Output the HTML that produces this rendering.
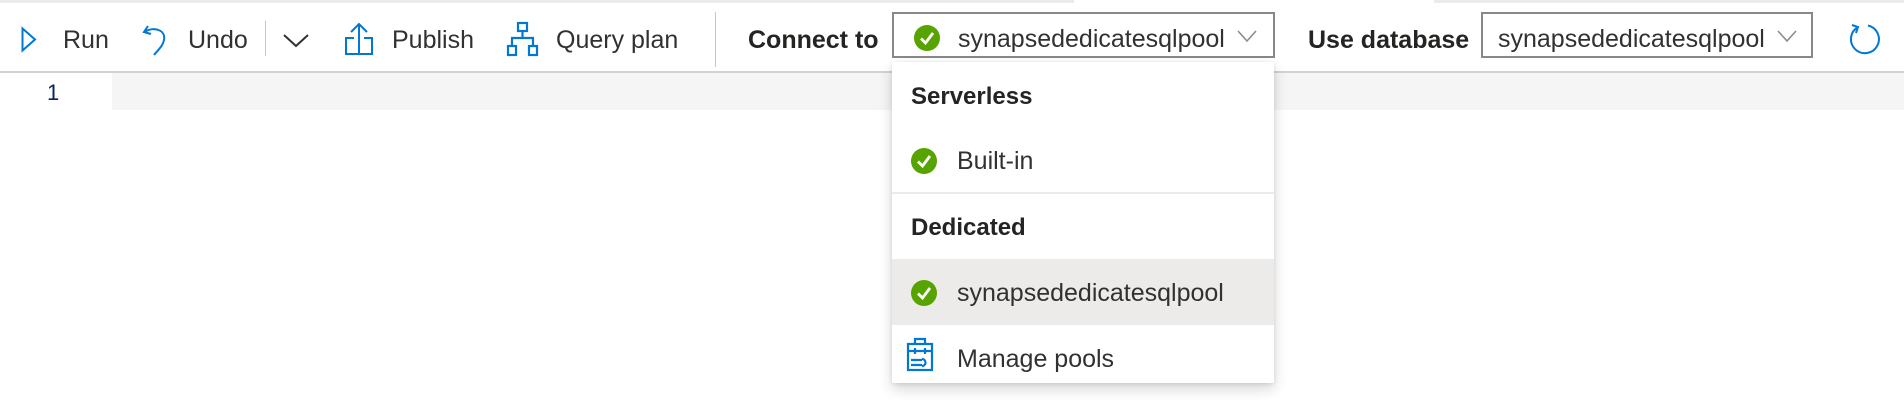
<!DOCTYPE html>
<html><head><style>
body{margin:0;width:1904px;height:418px;background:#fff;position:relative;overflow:hidden;font-family:"Liberation Sans",Arial,sans-serif;color:#323130}
.a{position:absolute}
.t{position:absolute;font-size:25px;line-height:30px;white-space:nowrap}
.b{font-weight:bold;color:#252423}
svg{position:absolute;overflow:visible}
</style></head><body>
<div class="a" style="left:0;top:0;width:1904px;height:3px;background:#ebebeb"></div>
<div class="a" style="left:1074px;top:0;width:360px;height:3px;background:#fff"></div>
<div class="a" style="left:0;top:71px;width:1904px;height:2px;background:#d2d2d2"></div>
<div class="a" style="left:112px;top:73px;width:1792px;height:37px;background:#f5f5f5"></div>
<div class="t" style="left:47px;top:78px;font-size:22px;color:#0b216f">1</div>

<svg style="left:21px;top:27px" width="16" height="25"><path d="M1.5 1.5 L14 12.5 L1.5 23.5 Z" fill="none" stroke="#0078d4" stroke-width="2"/></svg>
<div class="t" style="left:63px;top:25px">Run</div>
<svg style="left:142px;top:24px" width="28" height="32"><path d="M6 2 L2 8 L9 10 M2 8 C12 2 24 6 22 16 C21 22 16 26 12 31" fill="none" stroke="#0078d4" stroke-width="2"/></svg>
<div class="t" style="left:188px;top:25px">Undo</div>
<div class="a" style="left:265px;top:21px;width:1px;height:35px;background:#c8c6c4"></div>
<svg style="left:283px;top:34px" width="26" height="14"><path d="M1 1 L13 12 L25 1" fill="none" stroke="#323130" stroke-width="2"/></svg>
<svg style="left:344px;top:22px" width="30" height="34"><path d="M15 31 V2 M7 10 L15 2 L23 10 M10 16 H2 V32 H28 V16 H20" fill="none" stroke="#0078d4" stroke-width="2"/></svg>
<div class="t" style="left:392px;top:25px">Publish</div>
<svg style="left:506px;top:22px" width="34" height="34"><g fill="none" stroke="#0078d4" stroke-width="2.2"><rect x="12" y="1" width="9" height="8"/><rect x="2" y="24" width="8" height="9"/><rect x="23" y="24" width="8" height="9"/><path d="M16.5 9 V16 M6 24 V16 H27 V24"/></g></svg>
<div class="t" style="left:556px;top:25px">Query plan</div>
<div class="a" style="left:715px;top:12px;width:1px;height:55px;background:#c8c6c4"></div>
<div class="t b" style="left:748px;top:25px">Connect to</div>

<div class="a" style="left:892px;top:12px;width:379px;height:42px;border:2px solid #8a8886"></div>
<svg style="left:914px;top:25px" width="26" height="26"><circle cx="13" cy="13" r="13" fill="#57a300"/><path d="M7 13.5 L11.5 18 L19 8" fill="none" stroke="#fff" stroke-width="2.8"/></svg>
<div class="t" style="left:958px;top:24px">synapsededicatesqlpool</div>
<svg style="left:1237px;top:30px" width="20" height="12"><path d="M1 1 L10 11 L19 1" fill="none" stroke="#8a8886" stroke-width="1.5"/></svg>
<div class="t b" style="left:1308px;top:25px">Use database</div>
<div class="a" style="left:1481px;top:12px;width:328px;height:42px;border:2px solid #8a8886"></div>
<div class="t" style="left:1498px;top:24px">synapsededicatesqlpool</div>
<svg style="left:1777px;top:30px" width="20" height="12"><path d="M1 1 L10 11 L19 1" fill="none" stroke="#8a8886" stroke-width="1.5"/></svg>
<svg style="left:1847px;top:22px" width="34" height="34"><path d="M11 5 A14 14 0 1 0 21 3.5" fill="none" stroke="#0078d4" stroke-width="2"/><path d="M5 3 L11 5 L9 11" fill="none" stroke="#0078d4" stroke-width="2"/></svg>

<div class="a" style="left:892px;top:62px;width:382px;height:321px;background:#fff;box-shadow:0 6px 14px rgba(0,0,0,0.16),0 1px 4px rgba(0,0,0,0.1);border-radius:2px">
 <div class="t b" style="left:19px;top:20px;font-size:24px">Serverless</div>
 <svg style="left:19px;top:86px" width="26" height="26"><circle cx="13" cy="13" r="13" fill="#57a300"/><path d="M7 13.5 L11.5 18 L19 8" fill="none" stroke="#fff" stroke-width="2.8"/></svg>
 <div class="t" style="left:65px;top:84px">Built-in</div>
 <div class="a" style="left:0;top:130px;width:382px;height:2px;background:#edebe9"></div>
 <div class="t b" style="left:19px;top:151px;font-size:24px">Dedicated</div>
 <div class="a" style="left:0;top:197px;width:382px;height:66px;background:#edebe9"></div>
 <svg style="left:19px;top:218px" width="26" height="26"><circle cx="13" cy="13" r="13" fill="#57a300"/><path d="M7 13.5 L11.5 18 L19 8" fill="none" stroke="#fff" stroke-width="2.8"/></svg>
 <div class="t" style="left:65px;top:216px">synapsededicatesqlpool</div>
 <svg style="left:15px;top:276px" width="26" height="34"><g fill="none" stroke="#0078d4" stroke-width="2.2"><rect x="1" y="6" width="24" height="26"/><path d="M8 6 V1 H18 V6 M1 13 H25 M8 10 V16 M18 10 V16 M4 22 H15 M4 27 H15 M15 21 A3 3 0 1 1 15 28"/></g></svg>
 <div class="t" style="left:65px;top:282px">Manage pools</div>
</div>
</body></html>
